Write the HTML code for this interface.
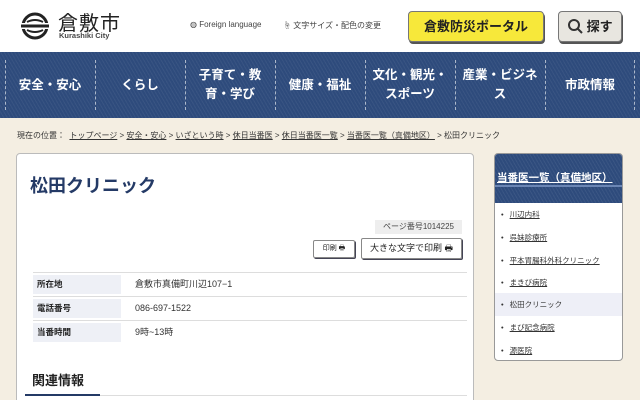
<!DOCTYPE html>
<html style="width:640px;height:400px;overflow:hidden"><head><meta charset="utf-8"><style>
*{margin:0;padding:0;box-sizing:border-box}
body{width:640px;height:400px;overflow:hidden;background:#f4eee2;font-family:"Liberation Sans","Noto Sans CJK JP",sans-serif;color:#222;position:relative}
.a{position:absolute}
.hdr{left:0;top:0;width:640px;height:52px;background:#fff}
.nav{left:0;top:52px;width:640px;height:66px;background:#2e4b7c;background-image:repeating-linear-gradient(60deg,rgba(255,255,255,.05) 0 1px,transparent 1px 3px)}
.nav div{position:absolute;top:0;height:66px;display:flex;align-items:center;justify-content:center;text-align:center;color:#fff;font-weight:bold;font-size:12.5px;line-height:19px}
.sep{position:absolute;top:8px;height:50px;border-left:1px dashed rgba(255,255,255,.6)}
.bc{left:17px;top:130px;font-size:8px;color:#333}
.main{left:16px;top:153px;width:458px;height:260px;background:#fff;border:1px solid #bbb;border-radius:4px}
.side{left:494px;top:153px;width:129px;height:208px;background:#fff;border:1px solid #999;border-radius:4px;overflow:hidden}
.sh{left:0;top:0;width:129px;height:49px;background:#2e4b7c;background-image:repeating-linear-gradient(60deg,rgba(255,255,255,.06) 0 1px,transparent 1px 3px)}
.si{position:absolute;left:0;width:129px;height:23px;font-size:7.5px;padding-left:6px;line-height:23px;color:#333}
.si u{margin-left:6px}
.row{position:absolute;left:16px;width:434px;height:24px;border-top:1px solid #ddd}
.lab{position:absolute;left:0;top:2px;width:88px;height:19px;background:#eef0f6;font-size:8.5px;font-weight:bold;padding-left:4px;line-height:19px}
.val{position:absolute;left:102px;top:2px;font-size:9px;line-height:19px;color:#333}
</style></head><body>
<div class="a hdr"></div>
<svg class="a" style="left:18px;top:12px" width="34" height="28" viewBox="0 0 34 28"><circle cx="17" cy="14" r="12" fill="none" stroke="#222" stroke-width="3"/><rect x="2" y="11" width="30" height="6" fill="#fff"/><path d="M3 14 H31" stroke="#222" stroke-width="3"/><path d="M9 10 q8 -4 16 0 M9 18 q8 4 16 0" stroke="#222" stroke-width="2" fill="none"/></svg>
<div class="a" style="left:58px;top:7px;font-size:20px;letter-spacing:1px">倉敷市</div>
<div class="a" style="left:59px;top:31px;font-size:7.5px;font-weight:bold;color:#444">Kurashiki City</div>
<div class="a" style="left:190px;top:20px;font-size:8px;color:#444">◍ Foreign language</div>
<div class="a" style="left:283px;top:20px;font-size:8px;color:#444">☝ 文字サイズ・配色の変更</div>
<div class="a" style="left:408px;top:11px;width:136px;height:31px;background:#f7e83a;border:1px solid #777;border-radius:4px;box-shadow:1px 2px 0 #555;font-size:13px;font-weight:bold;text-align:center;line-height:29px">倉敷防災ポータル</div>
<div class="a" style="left:558px;top:11px;width:64px;height:31px;background:#e8e6e0;border:1px solid #777;border-radius:4px;box-shadow:1px 2px 0 #555;font-size:13px;font-weight:bold;line-height:29px;padding-left:8px">
<svg width="16" height="16" viewBox="0 0 16 16" style="vertical-align:-3px"><circle cx="7" cy="7" r="5" fill="none" stroke="#333" stroke-width="2"/><path d="M11 11 L15 15" stroke="#333" stroke-width="2"/></svg> 探す</div>
<div class="a nav">
<div style="left:5px;width:90px">安全・安心</div>
<div style="left:95px;width:90px">くらし</div>
<div style="left:185px;width:90px">子育て・教<br>育・学び</div>
<div style="left:275px;width:90px">健康・福祉</div>
<div style="left:365px;width:90px">文化・観光・<br>スポーツ</div>
<div style="left:455px;width:90px">産業・ビジネ<br>ス</div>
<div style="left:545px;width:90px">市政情報</div>
<span class="sep" style="left:5px"></span><span class="sep" style="left:95px"></span><span class="sep" style="left:185px"></span><span class="sep" style="left:275px"></span><span class="sep" style="left:365px"></span><span class="sep" style="left:455px"></span><span class="sep" style="left:545px"></span><span class="sep" style="left:634px"></span>
</div>
<div class="a bc">現在の位置：&nbsp; <u>トップページ</u> &gt; <u>安全・安心</u> &gt; <u>いざという時</u> &gt; <u>休日当番医</u> &gt; <u>休日当番医一覧</u> &gt; <u>当番医一覧（真備地区）</u> &gt; 松田クリニック</div>
<div class="a main">
<div class="a" style="left:13px;top:18px;font-size:18px;font-weight:bold;color:#243a66">松田クリニック</div>
<div class="a" style="left:358px;top:66px;width:87px;height:14px;background:#eee;font-size:8px;line-height:14px;text-align:center;color:#444">ページ番号1014225</div>
<div class="a" style="left:296px;top:86px;width:42px;height:18px;border:1px solid #888;border-radius:2px;box-shadow:1px 1px 0 #445;font-size:7px;line-height:16px;text-align:center">印刷 🖶</div>
<div class="a" style="left:344px;top:84px;width:101px;height:21px;border:1px solid #888;border-radius:2px;box-shadow:1px 1px 0 #445;font-size:9px;line-height:19px;text-align:center">大きな文字で印刷 🖶</div>
<div class="row" style="top:118px"><div class="lab">所在地</div><div class="val">倉敷市真備町川辺107−1</div></div>
<div class="row" style="top:142px"><div class="lab">電話番号</div><div class="val">086-697-1522</div></div>
<div class="row" style="top:166px"><div class="lab">当番時間</div><div class="val">9時~13時</div></div>
<div class="a" style="left:15px;top:216px;font-size:13px;font-weight:bold">関連情報</div>
<div class="a" style="left:8px;top:241px;width:442px;height:1px;background:#ddd"></div>
<div class="a" style="left:8px;top:240px;width:75px;height:2px;background:#243a66"></div>
</div>
<div class="a side">
<div class="a sh"><div style="position:absolute;left:2px;top:16px;font-size:10.5px;font-weight:bold;color:#fff;text-decoration:underline;white-space:nowrap">当番医一覧（真備地区）</div><div style="position:absolute;left:0;top:31px;width:129px;height:2px;background:#6b86b5"></div></div>
<div class="si" style="top:49px">•<u>川辺内科</u></div>
<div class="si" style="top:72px">•<u>呉妹診療所</u></div>
<div class="si" style="top:95px">•<u>平本胃腸科外科クリニック</u></div>
<div class="si" style="top:117px">•<u>まきび病院</u></div>
<div class="si" style="top:139px;background:#eeeff7">•<span style="margin-left:6px">松田クリニック</span></div>
<div class="si" style="top:162px">•<u>まび記念病院</u></div>
<div class="si" style="top:185px">•<u>源医院</u></div>
</div>
</body></html>
